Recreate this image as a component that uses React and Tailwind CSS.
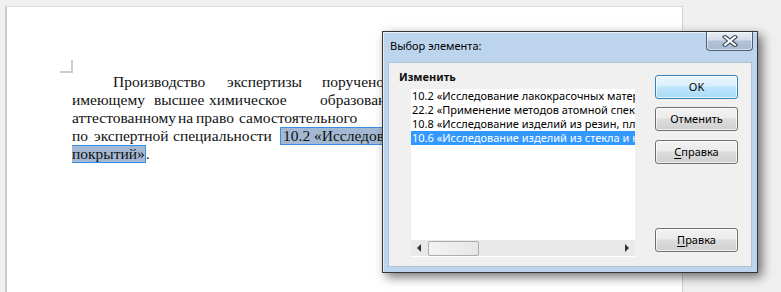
import React from "react";

function Btn({ children, primary, className = "" }) {
  return (
    <div
      className={`w-[83px] h-[24px] flex items-center justify-center rounded-[3px] border text-[11px] text-black ${
        primary
          ? "border-[#3c7fb1] bg-[linear-gradient(#eaf6fd_0%,#d9f0fc_45%,#bee6fd_50%,#a7d9f5_100%)]"
          : "border-[#707070] bg-[linear-gradient(#f2f2f2_0%,#ebebeb_45%,#dddddd_50%,#cfcfcf_100%)]"
      } shadow-[inset_0_0_0_1px_rgba(255,255,255,0.7)] ${className}`}
    >
      {children}
    </div>
  );
}

function W({ w, children }) {
  return <span className="shrink-0" style={{ width: w }}>{children}</span>;
}

export default function App() {
  const items = [
    "10.2 «Исследование лакокрасочных материалов и покрытий»",
    "22.2 «Применение методов атомной спектроскопии в экспертном исследовании объектов»",
    "10.8 «Исследование изделий из резин, пластмасс и других полимерных материалов»",
    "10.6 «Исследование изделий из стекла и керамики»",
  ];
  return (
    <div className="relative w-[781px] h-[292px] overflow-hidden bg-[#f0f0f0]">
      {/* page */}
      <div className="ml-[5px] mt-[6px] w-[678px] h-[300px] bg-white border-l-2 border-l-[#cacaca] border-t border-t-[#dcdcdc] border-r border-r-[#d0d0d0] overflow-hidden flex flex-col">
        <div className="mt-[53px] ml-[53px] w-[13px] h-[13px] border-r-2 border-b-2 border-[#cdcdcd]" />
        <div
          className="ml-[65px] w-[310px] overflow-hidden text-[15.5px] leading-[18px] text-[#111] whitespace-nowrap"
          style={{ fontFamily: '"Liberation Serif", "Times New Roman", serif' }}
        >
          <div className="flex">
            <W w={41} />
            <W w={114}>Производство</W>
            <W w={95}>экспертизы</W>
            <span className="shrink-0">поручено эксперту</span>
          </div>
          <div className="flex">
            <W w={82}>имеющему</W>
            <W w={55}>высшее</W>
            <W w={111}>химическое</W>
            <span className="shrink-0">образование,</span>
          </div>
          <div className="flex">
            <W w={106}>аттестованному</W>
            <W w={18}>на</W>
            <W w={43}>право</W>
            <W w={150}>самостоятельного</W>
            <span className="shrink-0">производства</span>
          </div>
          <div className="flex">
            <W w={22}>по</W>
            <W w={79}>экспертной</W>
            <W w={107}>специальности</W>
            <span className="shrink-0 h-[18px] pl-[2px] bg-[#a3b9d3] border border-[#3b8ee6] leading-[16px]">10.2 «Исследование лакокрасочных</span>
          </div>
          <div className="flex">
            <span className="shrink-0 -ml-[1px] h-[18px] bg-[#a3b9d3] border border-[#3b8ee6] leading-[16px]">покрытий»</span>
            <span className="shrink-0">.</span>
          </div>
        </div>
      </div>

      {/* dialog window */}
      <div className="absolute left-[382px] top-[31px] w-[376px] h-[242px] border border-[#363636] bg-[#bdd4ed] flex flex-col shadow-[inset_1px_1px_0_rgba(255,255,255,0.6),4px_4px_10px_rgba(0,0,0,0.55)] font-['Noto_Sans',sans-serif]">
        <div className="h-[30px] flex items-start justify-between">
          <div className="pl-[7px] pt-[6px] text-[11px] leading-[16px] text-black">Выбор элемента:</div>
          <div className="mr-[4px] w-[47px] h-[19px] border border-t-0 border-[#4f5f72] rounded-b-[4px] bg-[linear-gradient(#e9eef5_0%,#d3dce8_45%,#b2c3d8_50%,#a8bad1_100%)] flex items-center justify-center shadow-[inset_0_0_0_1px_rgba(255,255,255,0.55)]">
            <svg width="16" height="12" viewBox="0 0 16 12">
              <path d="M3 2 L13 10 M13 2 L3 10" stroke="#3a4656" strokeWidth="4.2" strokeLinecap="square" />
              <path d="M3 2 L13 10 M13 2 L3 10" stroke="#ffffff" strokeWidth="2" strokeLinecap="square" />
            </svg>
          </div>
        </div>
        <div className="mx-[5px] h-[205px] border border-[#b0c2d6] bg-[#f0f0f0] flex">
          <div className="pl-[10px] pt-[6px] flex flex-col">
            <div className="text-[11px] leading-[16px] font-bold text-[#111]">Изменить</div>
            <div className="mt-[4px] ml-[12px] w-[224px] h-[168px] bg-white flex flex-col overflow-hidden">
              <div className="flex-1">
                {items.map((t, i) => (
                  <div
                    key={i}
                    className={`h-[14px] pl-[1px] text-[11px] leading-[14px] whitespace-nowrap overflow-hidden ${
                      i === 3 ? "bg-[#3399ff] text-white" : "text-black"
                    }`}
                  >
                    {t}
                  </div>
                ))}
              </div>
              <div className="h-[17px] bg-[#e9e9e9] flex items-center border-b border-white">
                <div className="w-[17px] h-[16px] flex items-center justify-center">
                  <svg width="5" height="8" viewBox="0 0 5 8">
                    <path d="M4 0 L0 4 L4 8 Z" fill="#333" />
                  </svg>
                </div>
                <div className="w-[51px] h-[15px] rounded-[2px] border border-[#adadad] bg-[linear-gradient(90deg,#f3f3f3,#e6e6e6)]" />
                <div className="flex-1" />
                <div className="w-[17px] h-[16px] flex items-center justify-center">
                  <svg width="5" height="8" viewBox="0 0 5 8">
                    <path d="M1 0 L5 4 L1 8 Z" fill="#333" />
                  </svg>
                </div>
              </div>
            </div>
          </div>
          <div className="ml-[20px] pt-[12px] flex flex-col">
            <Btn primary>OK</Btn>
            <Btn className="mt-[8px]">Отменить</Btn>
            <Btn className="mt-[9px]">
              <span className="underline underline-offset-2">С</span>правка
            </Btn>
            <Btn className="mt-[64px]">
              <span className="underline underline-offset-2">П</span>равка
            </Btn>
          </div>
        </div>
      </div>
    </div>
  );
}
